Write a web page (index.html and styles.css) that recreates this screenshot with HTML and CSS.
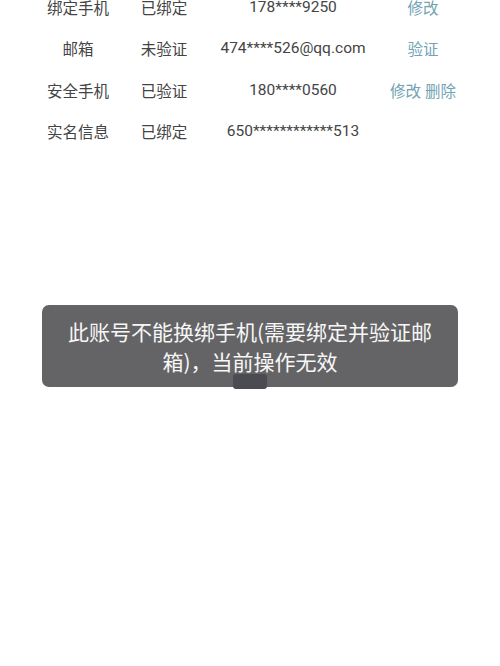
FILE: index.html
```html
<!DOCTYPE html>
<html lang="zh-CN">
<head>
<meta charset="utf-8">
<link rel="stylesheet" href="styles.css">
</head>
<body>
<div class="list">
  <div class="row">
    <span class="c1">绑定手机</span><span class="c2">已绑定</span><span class="c3">178****9250</span><span class="c4 link">修改</span>
  </div>
  <div class="row">
    <span class="c1">邮箱</span><span class="c2">未验证</span><span class="c3">474****526@qq.com</span><span class="c4 link">验证</span>
  </div>
  <div class="row">
    <span class="c1">安全手机</span><span class="c2">已验证</span><span class="c3">180****0560</span><span class="c4 link">修改 删除</span>
  </div>
  <div class="row">
    <span class="c1">实名信息</span><span class="c2">已绑定</span><span class="c3">650************513</span><span class="c4 link"></span>
  </div>
</div>
<div class="toast">
  <p class="toast-text">此账号不能换绑手机(需要绑定并验证邮<br>箱)，当前操作无效</p>
  <div class="toast-handle"></div>
</div>
</body>
</html>
```
FILE: styles.css
```css
html, body {
  margin: 0;
  padding: 0;
  background: #ffffff;
  width: 500px;
  height: 666px;
  overflow: hidden;
  font-family: Roboto, "Noto Sans CJK SC", sans-serif;
}
.list {
  margin-top: -14px;
  padding-left: 30px;
}
.row {
  display: grid;
  grid-template-columns: 96px 76px 182px 78px;
  height: 41.5px;
  align-items: center;
  font-size: 15.5px;
  color: #444444;
}
.row span {
  text-align: center;
  white-space: nowrap;
}
.link {
  color: #72a3b5;
}
.toast {
  position: fixed;
  left: 42px;
  top: 305px;
  width: 416px;
  height: 82px;
  background: #646466;
  border-radius: 7px;
  display: flex;
  align-items: center;
  justify-content: center;
}
.toast-text {
  margin: 0;
  padding: 0 8px;
  font-family: "Noto Sans CJK SC", sans-serif;
  font-size: 21px;
  line-height: 30px;
  color: #f7f7f7;
  text-align: center;
  white-space: nowrap;
}
.toast-handle {
  position: absolute;
  left: 191px;
  bottom: -2px;
  width: 34px;
  height: 15px;
  background: #4b4c51;
  border-radius: 3px;
}
```
